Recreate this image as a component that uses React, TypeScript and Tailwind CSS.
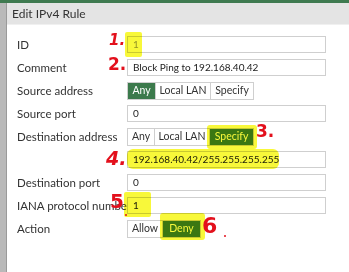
import React from "react";

const font = { fontFamily: "Lato, 'Open Sans', sans-serif" };
const hand = { fontFamily: "'DejaVu Sans', sans-serif" };

function Row({ label, children }: { label?: string; children?: React.ReactNode }) {
  return (
    <div className="flex h-[23px] items-center">
      <div className="w-[110px] shrink-0 whitespace-nowrap text-[11.5px] text-[#333]">{label}</div>
      {children}
    </div>
  );
}

function Input({ value, muted }: { value: string; muted?: boolean }) {
  return (
    <div
      className={`flex h-[17px] w-[199px] items-center whitespace-nowrap border border-[#cfcfcf] bg-white px-[5px] text-[10px] ${
        muted ? "text-[#9a9a9a]" : "text-[#222]"
      }`}
    >
      {value}
    </div>
  );
}

function Seg({ items, active }: { items: { t: string; w: number }[]; active: number }) {
  return (
    <div className="flex h-[18px] border border-[#cfcfcf] text-[10.5px]">
      {items.map((it, i) => (
        <div
          key={it.t}
          style={{ width: it.w }}
          className={`flex items-center justify-center whitespace-nowrap ${i > 0 ? "border-l border-[#cfcfcf]" : ""} ${
            i === active ? "bg-[#3c7a4c] text-white" : "bg-white text-[#333]"
          }`}
        >
          {it.t}
        </div>
      ))}
    </div>
  );
}

export default function App() {
  return (
    <div className="relative h-[272px] w-[349px] overflow-hidden bg-white" style={font}>
      <div className="h-[3px] bg-[#3f7a50]" />
      <div className="flex h-[269px]">
        <div className="w-[7px] shrink-0 border-r border-[#9a9a9a] bg-[#b9b9b9]" />
        <div className="flex flex-1 flex-col">
          <div className="flex h-[22px] items-center border-b border-[#f0f0f0] bg-[#e4e4e4] pl-[5px] text-[12px] text-[#333]">
            Edit IPv4 Rule
          </div>
          <div className="flex flex-col pl-[10px] pt-[8px]">
            <Row label="ID">
              <Input value="1" muted />
            </Row>
            <Row label="Comment">
              <Input value="Block Ping to 192.168.40.42" />
            </Row>
            <Row label="Source address">
              <Seg
                active={0}
                items={[
                  { t: "Any", w: 27 },
                  { t: "Local LAN", w: 55 },
                  { t: "Specify", w: 43 },
                ]}
              />
            </Row>
            <Row label="Source port">
              <Input value="0" />
            </Row>
            <Row label="Destination address">
              <Seg
                active={2}
                items={[
                  { t: "Any", w: 26 },
                  { t: "Local LAN", w: 55 },
                  { t: "Specify", w: 44 },
                ]}
              />
            </Row>
            <Row>
              <Input value="192.168.40.42/255.255.255.255" />
            </Row>
            <Row label="Destination port">
              <Input value="0" />
            </Row>
            <Row label="IANA protocol number">
              <Input value="1" />
            </Row>
            <Row label="Action">
              <Seg
                active={1}
                items={[
                  { t: "Allow", w: 34 },
                  { t: "Deny", w: 38 },
                ]}
              />
            </Row>
          </div>
        </div>
      </div>

      {/* highlighter */}
      <div className="pointer-events-none absolute left-[125px] top-[32px] h-[25px] w-[17px] rounded-[2px] bg-[#f8f83a] mix-blend-multiply" />
      <div className="pointer-events-none absolute left-[207px] top-[125px] h-[24px] w-[50px] rounded-[3px] bg-[#f8f83a] mix-blend-multiply" />
      <div className="pointer-events-none absolute left-[127px] top-[149px] h-[20px] w-[152px] rounded-[6px] bg-[#f8f83a] mix-blend-multiply" />
      <div className="pointer-events-none absolute left-[124px] top-[192px] h-[25px] w-[27px] rounded-[2px] bg-[#f8f83a] mix-blend-multiply" />
      <div className="pointer-events-none absolute left-[160px] top-[213px] h-[27px] w-[45px] rounded-[3px] bg-[#f8f83a] mix-blend-multiply" />

      {/* annotations */}
      <div className="absolute left-[109px] top-[33px] text-[15px] font-bold italic leading-none text-[#e3101c]" style={hand}>1.</div>
      <div className="absolute left-[108px] top-[56px] text-[17px] font-bold leading-none text-[#e3101c]" style={hand}>2.</div>
      <div className="absolute left-[256px] top-[123px] text-[17px] font-bold leading-none text-[#e3101c]" style={hand}>3.</div>
      <div className="absolute left-[106px] top-[149px] text-[19px] font-bold italic leading-none text-[#e3101c]" style={hand}>4.</div>
      <div className="absolute left-[110px] top-[191px] text-[20px] font-bold leading-none text-[#e3101c]" style={hand}>5</div>
      <div className="absolute left-[125px] top-[214px] h-[2px] w-[2px] rounded-full bg-[#e3101c]" />
      <div className="absolute left-[202px] top-[215px] text-[22px] font-bold leading-none text-[#e3101c]" style={hand}>6</div>
      <div className="absolute left-[224px] top-[235px] h-[2px] w-[2px] rounded-full bg-[#e3101c]" />
    </div>
  );
}
